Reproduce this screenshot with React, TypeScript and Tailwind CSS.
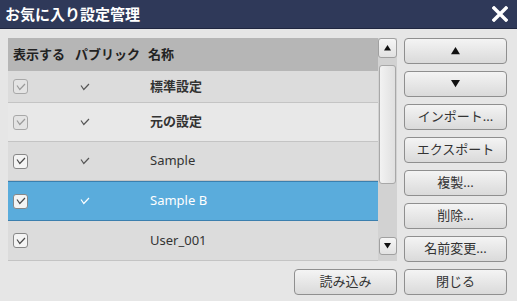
import React from 'react';

type Row = {
  name: string;
  visible: boolean;
  isPublic: boolean;
  system?: boolean;
  selected?: boolean;
  h: string;
  bg: string;
};

const rows: Row[] = [
  { name: '標準設定', visible: true, isPublic: true, system: true, h: 'h-[32px]', bg: 'bg-[#dcdcdc]' },
  { name: '元の設定', visible: true, isPublic: true, system: true, h: 'h-[39px]', bg: 'bg-[#e8e8e8]' },
  { name: 'Sample', visible: true, isPublic: true, h: 'h-[39px]', bg: 'bg-[#dcdcdc]' },
  { name: 'Sample B', visible: true, isPublic: true, selected: true, h: 'h-[40px]', bg: 'bg-[#5aacdc]' },
  { name: 'User_001', visible: true, isPublic: false, h: 'h-[40px]', bg: 'bg-[#dcdcdc]' },
];

const Check: React.FC<{ color: string }> = ({ color }) => (
  <svg width="10" height="8" viewBox="0 0 10 8">
    <path d="M1 2.5 L3.8 6.5 L9 1" fill="none" stroke={color} strokeWidth="1.2" />
  </svg>
);

const Tri: React.FC<{ up?: boolean; size?: number }> = ({ up, size = 9 }) => (
  <svg width={size} height={size * 0.8} viewBox="0 0 10 8">
    <path d={up ? 'M5 0 L10 8 L0 8 Z' : 'M0 0 L10 0 L5 8 Z'} fill="#111" />
  </svg>
);

const CheckBox: React.FC<{ disabled?: boolean }> = ({ disabled }) => (
  <div
    className={
      'w-[15px] h-[15px] rounded-[3px] border-[1.5px] flex items-center justify-center ' +
      (disabled ? 'border-[#a8a8a8] bg-[#e4e4e4]' : 'border-[#888] bg-[#f4f4f4]')
    }
  >
    <Check color={disabled ? '#9a9a9a' : '#4a4a4a'} />
  </div>
);

const Btn: React.FC<{ children: React.ReactNode; className?: string }> = ({ children, className }) => (
  <button
    className={
      'w-[103px] h-[26px] rounded-[4px] border border-[#8f8f8f] bg-gradient-to-b from-[#f4f4f4] to-[#dadada] text-[13px] text-[#333] flex items-center justify-center ' +
      (className ?? '')
    }
  >
    {children}
  </button>
);

export default function App() {
  return (
    <div
      className="w-[517px] h-[301px] bg-[#e6e6e6] flex flex-col overflow-hidden"
      style={{ fontFamily: '"Noto Sans", "Noto Sans CJK JP", sans-serif' }}
    >
      {/* title */}
      <div className="h-[29px] bg-[#2f3959] border-b border-[#1f2640] flex items-center justify-between pl-[5px] pr-[9px]">
        <span className="text-white font-bold text-[15px] leading-none">お気に入り設定管理</span>
        <svg width="16" height="16" viewBox="0 0 16 16">
          <path d="M2 2 L14 14 M14 2 L2 14" stroke="#fff" strokeWidth="3.4" strokeLinecap="square" />
        </svg>
      </div>

      <div className="flex gap-[7px] pl-[8px] pt-[9px]">
        {/* table */}
        <div className="w-[389px] h-[223px] flex bg-[#d6d6d6]">
          <div className="w-[370px] flex flex-col">
            <div className="h-[33px] bg-[#b6b6b6] flex items-center text-[13px] font-bold text-[#222]">
              <div className="w-[62px] pl-[5px]">表示する</div>
              <div className="w-[73px] pl-[5px]">パブリック</div>
              <div className="pl-[5px]">名称</div>
            </div>
            {rows.map((r) => (
              <div
                key={r.name}
                className={
                  'flex items-center text-[13px] ' +
                  r.h +
                  ' ' +
                  r.bg +
                  (r.selected
                    ? ' border-y border-[#3b7fae] text-white'
                    : ' border-b border-[#c4c4c4] text-[#333]') +
                  (r.system ? ' font-bold text-[#222]' : '')
                }
              >
                <div className="w-[62px] pl-[5px]">
                  <CheckBox disabled={r.system} />
                </div>
                <div className="w-[73px] pl-[10px]">
                  {r.isPublic && <Check color={r.selected ? '#ffffff' : '#555'} />}
                </div>
                <div className="pl-[7px]">{r.name}</div>
              </div>
            ))}
          </div>
          {/* scrollbar */}
          <div className="w-[19px] flex flex-col items-center bg-[#d2d2d2]">
            <div className="w-[19px] h-[20px] rounded-[3px] border border-[#a0a0a0] bg-gradient-to-b from-[#f6f6f6] to-[#e2e2e2] flex items-center justify-center">
              <Tri up size={7} />
            </div>
            <div className="mt-[7px] w-[17px] h-[119px] rounded-[3px] border border-[#a8a8a8] bg-gradient-to-r from-[#f2f2f2] to-[#e0e0e0]" />
            <div className="flex-1" />
            <div className="w-[18px] h-[18px] mb-[6px] rounded-[3px] border border-[#a0a0a0] bg-gradient-to-b from-[#f6f6f6] to-[#e2e2e2] flex items-center justify-center">
              <Tri size={7} />
            </div>
          </div>
        </div>

        {/* side buttons */}
        <div className="flex flex-col gap-[7px]">
          <Btn>
            <Tri up />
          </Btn>
          <Btn>
            <Tri />
          </Btn>
          <Btn>インポート...</Btn>
          <Btn>エクスポート</Btn>
          <Btn>複製...</Btn>
          <Btn>削除...</Btn>
          <Btn>名前変更...</Btn>
        </div>
      </div>

      <div className="flex justify-end gap-[7px] pr-[10px] pt-[7px]">
        <Btn>読み込み</Btn>
        <Btn>閉じる</Btn>
      </div>
    </div>
  );
}
